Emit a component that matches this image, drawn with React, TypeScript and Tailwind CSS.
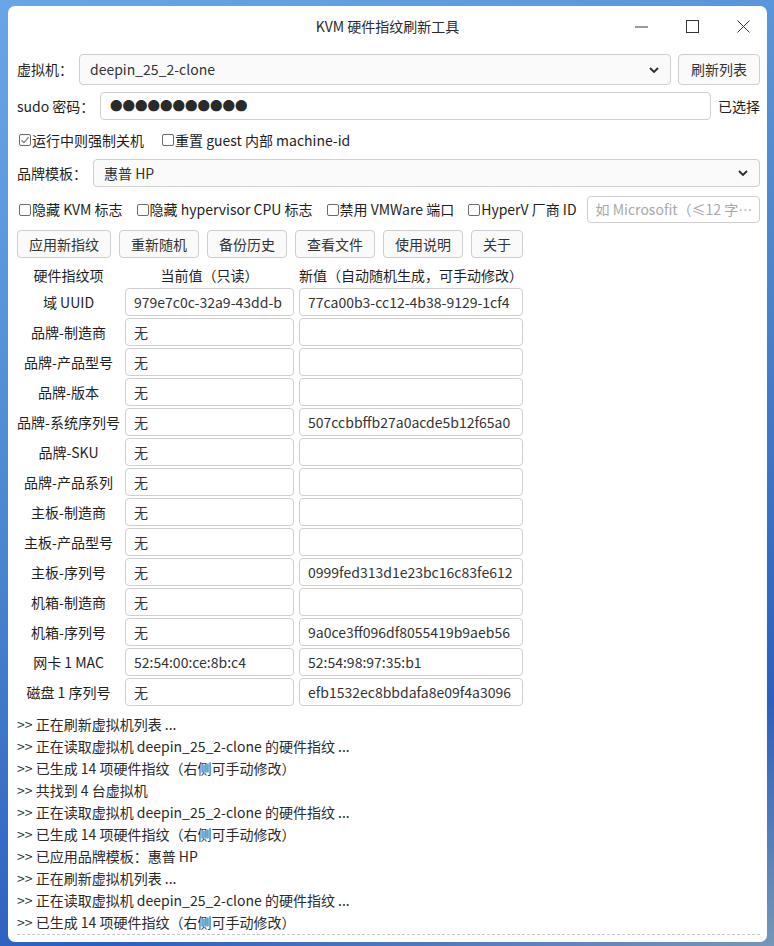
import React from 'react';

const rows: [string, string, string][] = [
  ['域 UUID', '979e7c0c-32a9-43dd-b', '77ca00b3-cc12-4b38-9129-1cf4'],
  ['品牌-制造商', '无', ''],
  ['品牌-产品型号', '无', ''],
  ['品牌-版本', '无', ''],
  ['品牌-系统序列号', '无', '507ccbbffb27a0acde5b12f65a0'],
  ['品牌-SKU', '无', ''],
  ['品牌-产品系列', '无', ''],
  ['主板-制造商', '无', ''],
  ['主板-产品型号', '无', ''],
  ['主板-序列号', '无', '0999fed313d1e23bc16c83fe612'],
  ['机箱-制造商', '无', ''],
  ['机箱-序列号', '无', '9a0ce3ff096df8055419b9aeb56'],
  ['网卡 1 MAC', '52:54:00:ce:8b:c4', '52:54:98:97:35:b1'],
  ['磁盘 1 序列号', '无', 'efb1532ec8bbdafa8e09f4a3096'],
];

const logs = [
  '>> 正在刷新虚拟机列表 ...',
  '>> 正在读取虚拟机 deepin_25_2-clone 的硬件指纹 ...',
  '>> 已生成 14 项硬件指纹（右侧可手动修改）',
  '>> 共找到 4 台虚拟机',
  '>> 正在读取虚拟机 deepin_25_2-clone 的硬件指纹 ...',
  '>> 已生成 14 项硬件指纹（右侧可手动修改）',
  '>> 已应用品牌模板：惠普 HP',
  '>> 正在刷新虚拟机列表 ...',
  '>> 正在读取虚拟机 deepin_25_2-clone 的硬件指纹 ...',
  '>> 已生成 14 项硬件指纹（右侧可手动修改）',
];

const buttons = ['应用新指纹', '重新随机', '备份历史', '查看文件', '使用说明', '关于'];

function Check({ label, checked = false }: { label: string; checked?: boolean }) {
  return (
    <label className="flex items-center">
      <span className="flex h-[12px] w-[12px] items-center justify-center rounded-[2px] border border-[#6b6b6b] bg-white">
        {checked ? (
          <svg width="10" height="10" viewBox="0 0 10 10">
            <path d="M1.5 5.2 L4 7.6 L8.6 2.2" fill="none" stroke="#7a7a7a" strokeWidth="1.2" />
          </svg>
        ) : null}
      </span>
      <span className="ml-[1px]">{label}</span>
    </label>
  );
}

function Chevron() {
  return (
    <svg width="12" height="8" viewBox="0 0 12 8">
      <path d="M2 2 L6 6 L10 2" fill="none" stroke="#2a2a2a" strokeWidth="1.8" />
    </svg>
  );
}

function Field({ value }: { value: string }) {
  return (
    <div className="flex h-[28px] items-center overflow-hidden whitespace-nowrap rounded-[4px] border border-[#cfcfcf] bg-white px-[8px] text-[#333]">
      {value}
    </div>
  );
}

export default function App() {
  return (
    <div className="h-[946px] w-[774px] overflow-hidden bg-[linear-gradient(160deg,#6aa6e6_0%,#4a86cf_45%,#2d5fc0_80%,#7896b8_100%)] pl-[8px] pt-[6px] font-['Noto_Sans_CJK_SC','Noto_Sans',sans-serif] text-[14px] text-[#1e1e1e]">
      <div className="flex h-[936px] w-[759px] flex-col rounded-[7px] bg-white">
        {/* title bar */}
        <div className="relative flex h-[40px] shrink-0 items-center justify-center">
          <span className="text-[14px] text-[#2b2b2b]">KVM 硬件指纹刷新工具</span>
          <div className="absolute right-[16px] top-0 flex h-full items-center gap-[36px]">
            <svg width="15" height="15" viewBox="0 0 15 15">
              <path d="M1 8 H14" stroke="#333" strokeWidth="1" />
            </svg>
            <svg width="15" height="15" viewBox="0 0 15 15">
              <rect x="1.5" y="1.5" width="12" height="12" fill="none" stroke="#333" strokeWidth="1" />
            </svg>
            <svg width="15" height="15" viewBox="0 0 15 15">
              <path d="M1.5 1.5 L13.5 13.5 M13.5 1.5 L1.5 13.5" stroke="#333" strokeWidth="1" />
            </svg>
          </div>
        </div>

        <div className="flex flex-1 flex-col pl-[9px] pr-[7px]">
          {/* vm row */}
          <div className="mt-[8px] flex h-[31px] items-center">
            <span className="w-[62px]">虚拟机：</span>
            <div className="flex h-full flex-1 items-center justify-between rounded-[4px] border border-[#cfcfcf] bg-[#fafafa] pl-[10px] pr-[10px] text-[#333]">
              <span>deepin_25_2-clone</span>
              <Chevron />
            </div>
            <button className="ml-[7px] h-full w-[82px] rounded-[4px] border border-[#cfcfcf] bg-[#fafafa] text-[#333]">
              刷新列表
            </button>
          </div>

          {/* password row */}
          <div className="mt-[7px] flex h-[28px] items-center">
            <span className="w-[83px]">sudo 密码：</span>
            <div className="flex h-full flex-1 items-center rounded-[4px] border border-[#cfcfcf] bg-white pl-[9px] text-[#2a2a2a]">
              <span className="text-[12.5px] leading-none tracking-[0px]">●●●●●●●●●●●</span>
            </div>
            <span className="ml-[7px]">已选择</span>
          </div>

          {/* options row */}
          <div className="mt-[10px] flex h-[20px] items-center gap-[18px] pl-[2px]">
            <Check label="运行中则强制关机" checked />
            <Check label="重置 guest 内部 machine-id" />
          </div>

          {/* brand row */}
          <div className="mt-[9px] flex h-[28px] items-center">
            <span className="w-[76px]">品牌模板：</span>
            <div className="flex h-full flex-1 items-center justify-between rounded-[4px] border border-[#cfcfcf] bg-[#fafafa] pl-[10px] pr-[10px] text-[#333]">
              <span>惠普 HP</span>
              <Chevron />
            </div>
          </div>

          {/* flags row */}
          <div className="mt-[9px] flex h-[27px] items-center pl-[2px]">
            <div className="flex items-center gap-[14px]">
              <Check label="隐藏 KVM 标志" />
              <Check label="隐藏 hypervisor CPU 标志" />
              <Check label="禁用 VMWare 端口" />
              <Check label="HyperV 厂商 ID" />
            </div>
            <div className="ml-[10px] flex h-full flex-1 items-center overflow-hidden whitespace-nowrap rounded-[4px] border border-[#cfcfcf] bg-white pl-[8px] text-[#a8a8a8]">
              如 Microsofit（≤12 字…
            </div>
          </div>

          {/* action buttons */}
          <div className="mt-[7px] flex h-[28px] gap-[8px]">
            {buttons.map((b) => (
              <button
                key={b}
                className="h-full rounded-[4px] border border-[#cfcfcf] bg-[#fafafa] px-[11px] text-[#333]"
              >
                {b}
              </button>
            ))}
          </div>

          {/* table */}
          <div className="mt-[6px] grid grid-cols-[103px_169px_224px] gap-x-[5px] gap-y-[2px]">
            <div className="flex h-[22px] items-center justify-center">硬件指纹项</div>
            <div className="flex h-[22px] items-center justify-center">当前值（只读）</div>
            <div className="flex h-[22px] items-center justify-center">新值（自动随机生成，可手动修改）</div>
            {rows.map(([label, cur, next]) => (
              <React.Fragment key={label}>
                <div className="flex h-[28px] items-center justify-center whitespace-nowrap">{label}</div>
                <Field value={cur} />
                <Field value={next} />
              </React.Fragment>
            ))}
          </div>

          {/* log */}
          <div className="mt-[7px] flex flex-1 flex-col border-b border-dashed border-[#c8c8c8] pb-[1px] text-[#2a2a2a]">
            {logs.map((l, i) => (
              <div key={i} className="h-[22px] leading-[22px]">
                {l}
              </div>
            ))}
          </div>
          <div className="h-[9px]" />
        </div>
      </div>
    </div>
  );
}
